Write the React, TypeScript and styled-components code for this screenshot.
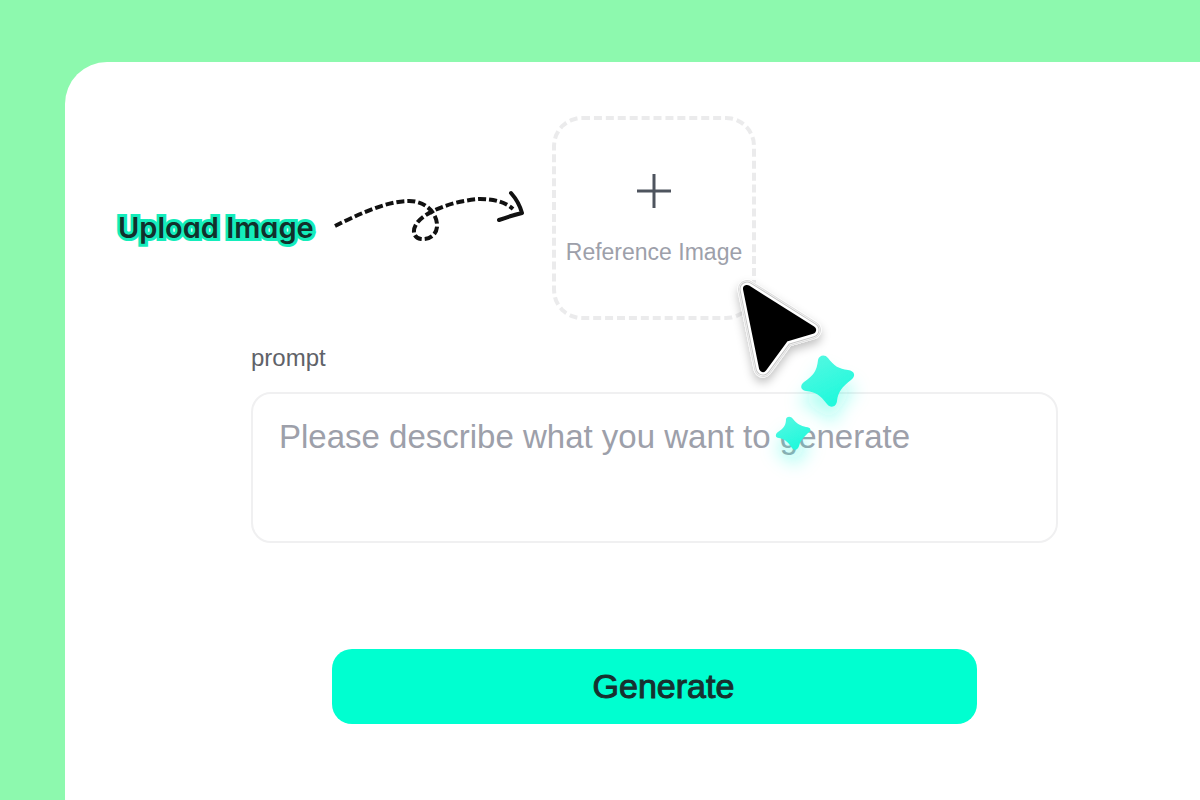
import React from "react";
import styled, { createGlobalStyle } from "styled-components";

const GlobalStyle = createGlobalStyle`
  *, *::before, *::after { box-sizing: border-box; }
  body {
    margin: 0;
    background: #8df9ae;
    font-family: "Liberation Sans", Arial, sans-serif;
  }
`;

const Page = styled.div`
  min-height: 100vh;
  padding: 62px 0 0 65px;
  display: flex;
`;

const Panel = styled.main`
  flex: 1;
  min-width: 0;
  padding: 54px 10px 76px 53px;
  border-top-left-radius: 42px;
  background: #fff;
`;

const UploadRow = styled.div`
  display: grid;
  grid-template-columns: 1fr auto 1fr;
`;

const Hint = styled.div`
  display: flex;
  align-items: flex-start;
  gap: 12px;
  padding-top: 64px;
`;

const HintText = styled.span`
  padding-top: 30px;
  font-family: Inter, sans-serif;
  font-size: 29px;
  font-weight: 600;
  line-height: 36px;
  font-feature-settings: "cv11";
  white-space: nowrap;
  color: #12302c;
  -webkit-text-stroke: 6px #14edbb;
  paint-order: stroke fill;
  stroke-linejoin: round;
`;

const Arrow = styled.svg`
  flex: none;
  width: 210px;
  height: 70px;
`;

const UploadArea = styled.div`
  position: relative;
`;

const UploadButton = styled.button`
  display: flex;
  flex-direction: column;
  align-items: center;
  gap: 28px;
  width: 204px;
  height: 204px;
  padding: 53px 0 0;
  border: 4px dashed #ebebec;
  border-radius: 30px;
  background: #fff;
  color: #9da0aa;
  font: 23px/30px "Liberation Sans", Arial, sans-serif;
  white-space: nowrap;
  cursor: pointer;
`;

const PlusIcon = styled.svg`
  width: 36px;
  height: 36px;
`;

const Pointer = styled.svg`
  position: absolute;
  left: 168px;
  top: 154px;
  z-index: 1;
  width: 150px;
  height: 210px;
  pointer-events: none;
`;

const Form = styled.form`
  display: flex;
  flex-direction: column;
  padding: 24px 132px 0 133px;
`;

const Label = styled.label`
  font-size: 24px;
  line-height: 28px;
  color: #606268;
`;

const PromptBox = styled.textarea`
  height: 151px;
  margin: 20px 0 106px;
  padding: 23px 26px;
  border: 2px solid #f0f0f1;
  border-radius: 20px;
  outline: none;
  resize: none;
  background: #fff;
  color: #30343b;
  font: 33px/40px "Liberation Sans", Arial, sans-serif;

  &::placeholder {
    color: #9da0aa;
    opacity: 1;
  }
`;

const GenerateButton = styled.button`
  align-self: center;
  width: 80%;
  height: 75px;
  padding: 0 0 2px 18px;
  border: 0;
  border-radius: 20px;
  background: #00ffd0;
  color: #17302f;
  font: 34px/40px "Liberation Sans", Arial, sans-serif;
  -webkit-text-stroke: 1px #17302f;
  cursor: pointer;
`;

const CURSOR = "M27 19 L92 60 L65 68 L43 98 Z";

export default function App() {
  return (
    <Page>
      <GlobalStyle />
      <Panel>
        <UploadRow>
          <Hint>
            <HintText>Upload Image</HintText>
            <Arrow viewBox="0 0 210 70" fill="none" stroke="#111" aria-hidden="true">
              <path
                d="M9 46 C31 35 60 21 83 21 C102 21 112 36 111 47 C110 56 102 60 95 59 C87 58 86 50 91 43 C100 30 132 20 154 19 C168 19 179 22 187 29"
                strokeWidth="4"
                strokeDasharray="8 3"
              />
              <path d="M185 13 Q193 22 196 33 Q184 36 173 40" strokeWidth="4" strokeLinecap="round" strokeLinejoin="round" />
            </Arrow>
          </Hint>
          <UploadArea>
            <UploadButton type="button">
              <PlusIcon viewBox="0 0 36 36" stroke="#4e545e" strokeWidth="3" aria-hidden="true">
                <path d="M18 1V35M1 18H35" />
              </PlusIcon>
              Reference Image
            </UploadButton>
            <Pointer viewBox="0 0 150 210" aria-hidden="true">
              <defs>
                <linearGradient id="mint" x1="0" y1="0" x2="0.5" y2="1">
                  <stop offset="0" stopColor="#58f8e2" />
                  <stop offset="1" stopColor="#20f9dc" />
                </linearGradient>
                <filter id="cursorShadow" x="-30%" y="-30%" width="160%" height="160%">
                  <feDropShadow dx="0" dy="5" stdDeviation="5" floodColor="#000" floodOpacity="0.24" />
                </filter>
                <filter id="starGlow" x="-60%" y="-60%" width="220%" height="260%">
                  <feDropShadow dx="0" dy="15" stdDeviation="9" floodColor="#20f9dc" floodOpacity="0.34" />
                </filter>
              </defs>
              <g strokeLinejoin="round">
                <path d={CURSOR} fill="#fff" stroke="#fff" strokeWidth="19" filter="url(#cursorShadow)" />
                <path d={CURSOR} fill="#dcdcdc" stroke="#dcdcdc" strokeWidth="18" />
                <path d={CURSOR} fill="#fff" stroke="#fff" strokeWidth="16" />
                <path d={CURSOR} fill="#c8c8c8" stroke="#c8c8c8" strokeWidth="15" />
                <path d={CURSOR} fill="#fff" stroke="#fff" strokeWidth="13" />
                <path d={CURSOR} fill="#000" stroke="#000" strokeWidth="8" />
              </g>
              <path
                d="M98 90 C99 85 105 84 108 88 C114 96 119 99 128 100 C135 101 136 106 131 110 C122 117 118 122 117 131 C116 138 110 138 107 134 C100 125 96 122 86 121 C80 120 80 115 84 112 C93 106 97 101 98 90 Z"
                fill="url(#mint)"
                filter="url(#starGlow)"
              />
              <path
                d="M66 149 C67 146 71 146 73 149 C77 154 81 156 86 157 C91 157 92 161 88 163 C83 168 80 171 79 176 C78 180 74 181 72 178 C68 172 65 169 59 168 C55 168 55 164 58 162 C64 158 66 155 66 149 Z"
                fill="url(#mint)"
                filter="url(#starGlow)"
              />
            </Pointer>
          </UploadArea>
        </UploadRow>
        <Form onSubmit={(event) => event.preventDefault()}>
          <Label htmlFor="prompt">prompt</Label>
          <PromptBox id="prompt" placeholder="Please describe what you want to generate" />
          <GenerateButton type="submit">Generate</GenerateButton>
        </Form>
      </Panel>
    </Page>
  );
}
